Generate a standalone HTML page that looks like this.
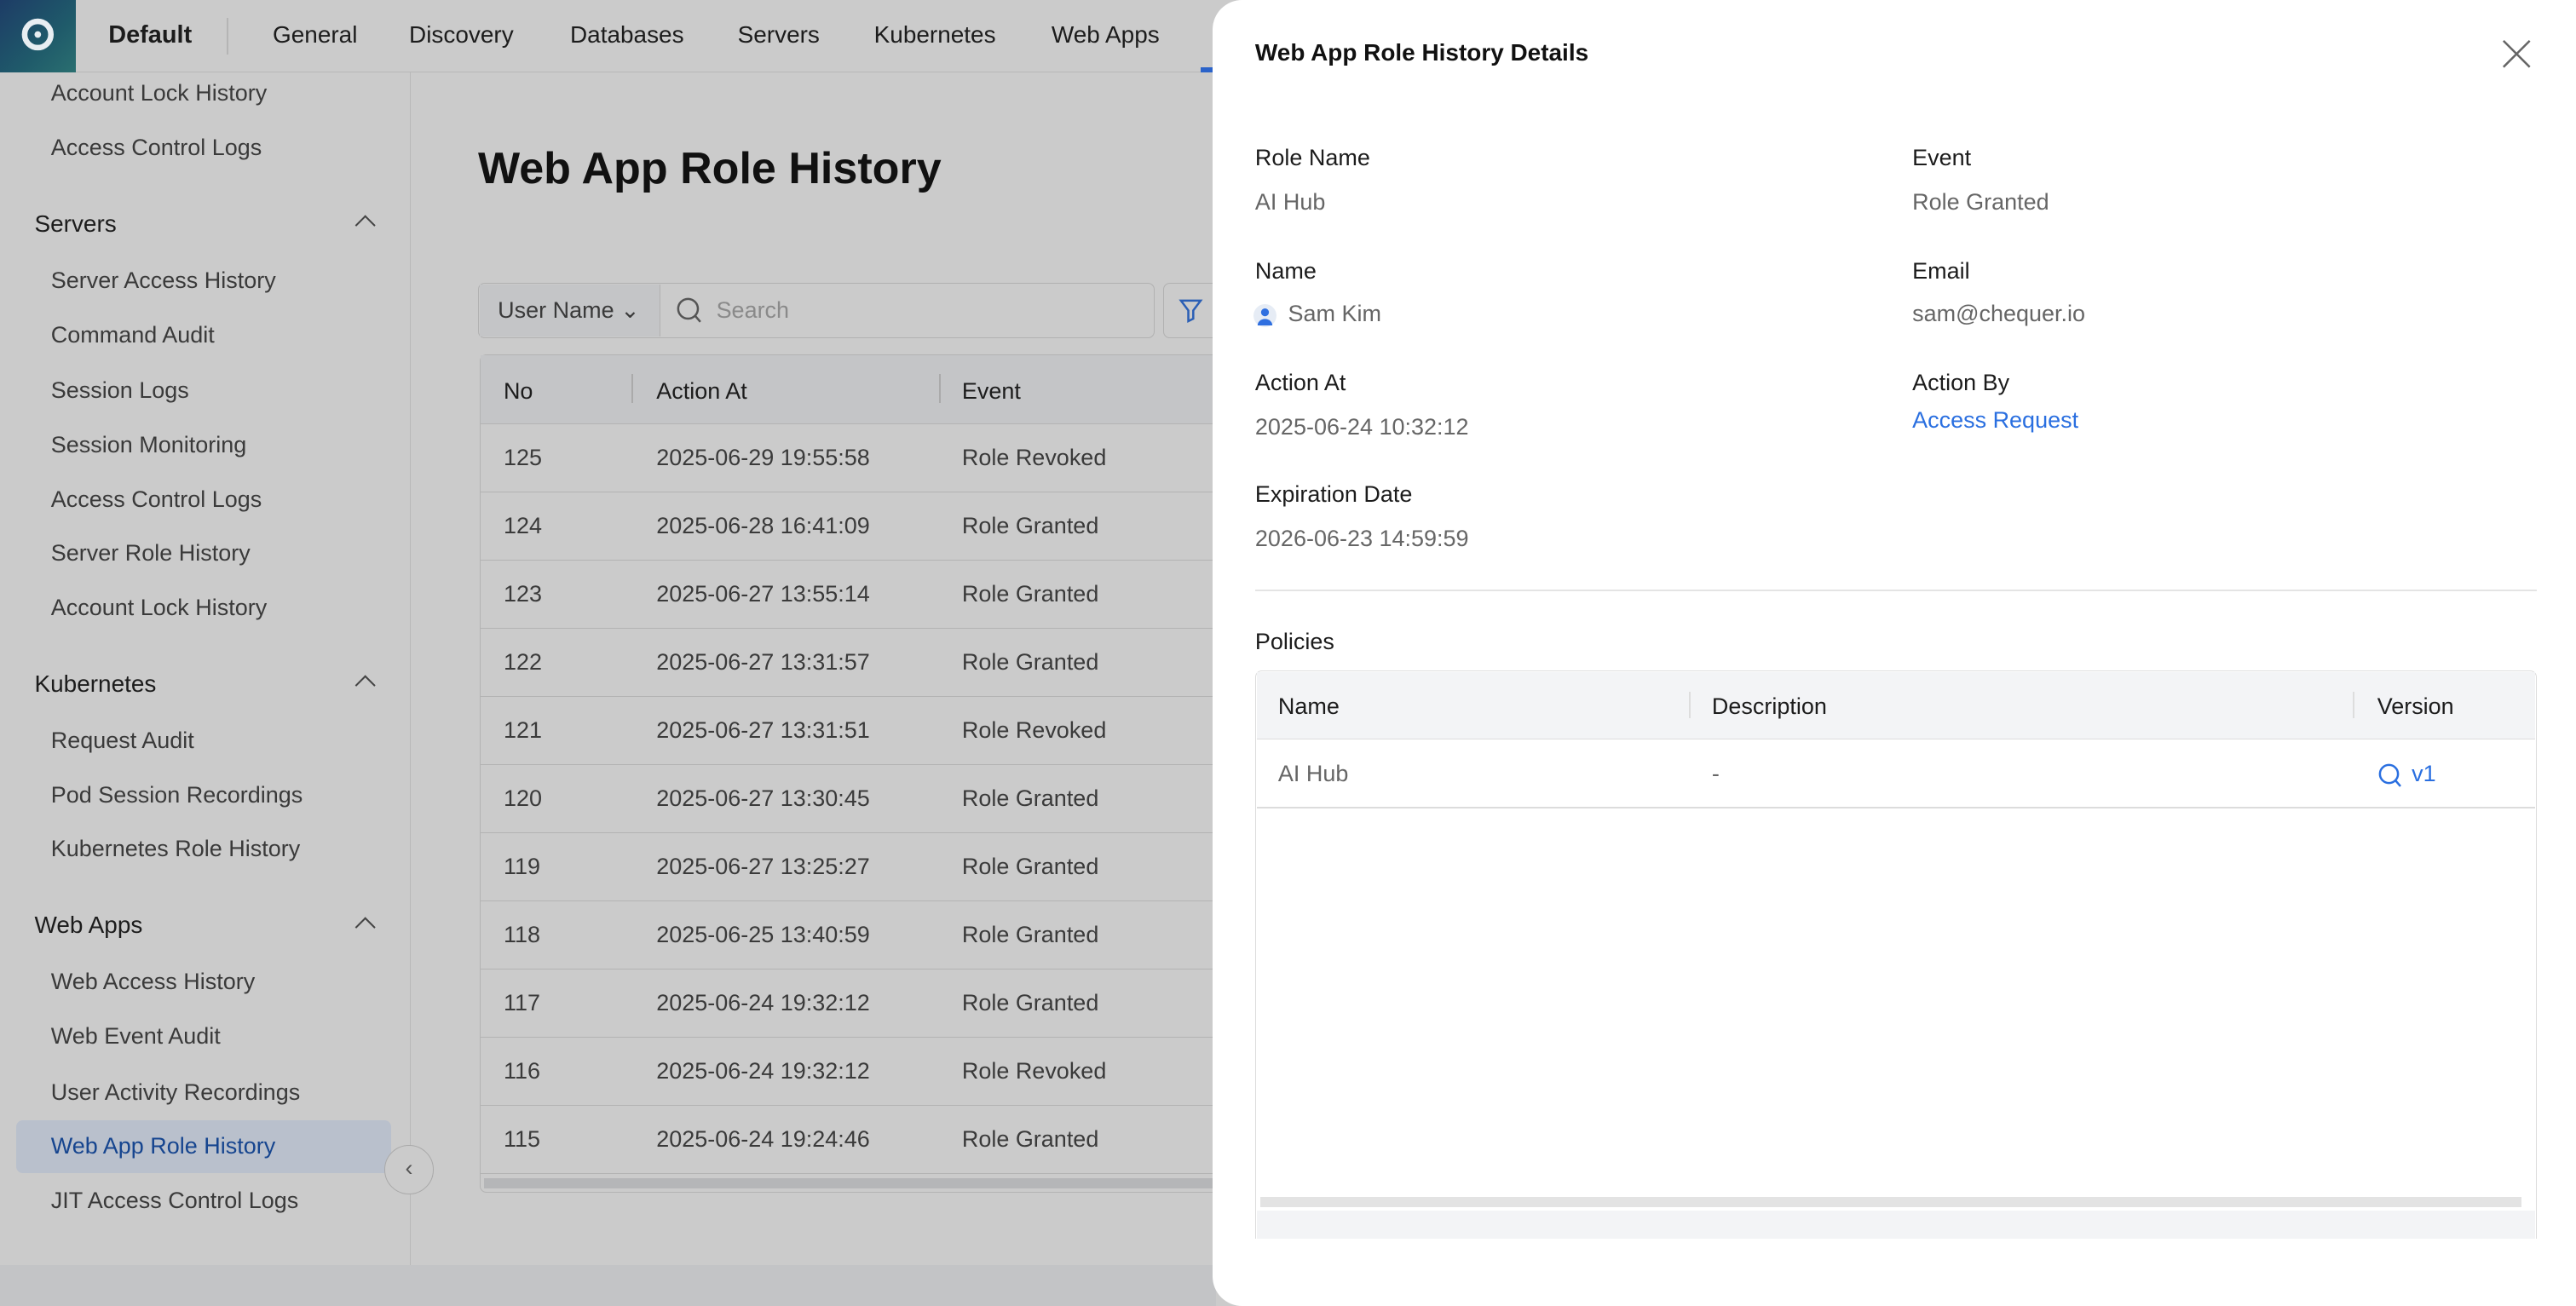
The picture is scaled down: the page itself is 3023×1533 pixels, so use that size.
<!DOCTYPE html>
<html><head><meta charset="utf-8"><style>
*{box-sizing:border-box;margin:0;padding:0}
html,body{width:3023px;height:1533px;overflow:hidden;background:#cbcbcb}
#r{zoom:1.92793;width:1568px;height:795px;position:relative;font-family:"Liberation Sans",sans-serif;color:#1c1c1c;font-size:14px;background:#cbcbcb}
.a{position:absolute}
.hdr{left:0;top:0;width:1568px;height:44px;background:#cbcbcb;border-bottom:1px solid #b8b8b8}
.logo{left:0;top:0;width:46px;height:44px;background:linear-gradient(135deg,#1d3c66,#1f5a6a 60%,#2a6f70)}
.nav{top:13px;font-size:14.5px;color:#1c1c1c}
.side{left:0;top:44px;width:250px;height:726px;border-right:1px solid #b9b9b9}
.si{left:31px;font-size:14px;color:#3a3a3a}
.sh{left:21px;font-size:14.5px;color:#1c1c1c}
.car{left:218px;width:9px;height:9px;border-left:1.5px solid #444;border-top:1.5px solid #444;transform:rotate(45deg)}
.tbl{left:292px;top:216px;width:460px;height:510px;border:1px solid #b3b3b3;border-radius:4px}
.th{left:0;top:0;width:460px;height:42px;background:#c4c5c7;border-bottom:1px solid #b3b3b3}
.row{left:0;width:460px;height:41.5px;border-bottom:1px solid #b3b3b3;color:#3a3a3a}
.row span{position:absolute;top:12px}
.drw{left:738px;top:0;width:830px;height:795px;background:#fff;border-radius:18px 0 0 18px}
.lb{font-size:14px;color:#1c1c1c}
.vl{font-size:14px;color:#666}
</style></head><body><div id="r">
<div class="a hdr"></div>
<div class="a logo"><svg width="46" height="44" viewBox="0 0 46 44"><path d="M23 11a8 8 0 1 1 0 16l-4 5" fill="none" stroke="#e8eef2" stroke-width="0"/><circle cx="23" cy="21" r="8" fill="none" stroke="#e8eef2" stroke-width="3.4"/><circle cx="23" cy="21" r="2" fill="#e8eef2"/></svg></div>
<div class="a nav" style="left:66px;font-weight:bold;font-size:15px">Default</div>
<div class="a" style="left:138px;top:11px;width:1px;height:22px;background:#b5b5b5"></div>
<div class="a nav" style="left:166px">General</div>
<div class="a nav" style="left:249px">Discovery</div>
<div class="a nav" style="left:347px">Databases</div>
<div class="a nav" style="left:449px">Servers</div>
<div class="a nav" style="left:532px">Kubernetes</div>
<div class="a nav" style="left:640px">Web Apps</div>
<div class="a" style="left:731px;top:41px;width:8px;height:3px;background:#2b63c9"></div>
<div class="a side"></div>
<div class="a si" style="top:49px">Account Lock History</div>
<div class="a si" style="top:82px">Access Control Logs</div>
<div class="a sh" style="top:128px">Servers</div><div class="a car" style="top:133px"></div>
<div class="a si" style="top:163px">Server Access History</div>
<div class="a si" style="top:196px">Command Audit</div>
<div class="a si" style="top:230px">Session Logs</div>
<div class="a si" style="top:263px">Session Monitoring</div>
<div class="a si" style="top:296px">Access Control Logs</div>
<div class="a si" style="top:329px">Server Role History</div>
<div class="a si" style="top:362px">Account Lock History</div>
<div class="a sh" style="top:408px">Kubernetes</div><div class="a car" style="top:413px"></div>
<div class="a si" style="top:443px">Request Audit</div>
<div class="a si" style="top:476px">Pod Session Recordings</div>
<div class="a si" style="top:509px">Kubernetes Role History</div>
<div class="a sh" style="top:555px">Web Apps</div><div class="a car" style="top:560px"></div>
<div class="a si" style="top:590px">Web Access History</div>
<div class="a si" style="top:623px">Web Event Audit</div>
<div class="a si" style="top:657px">User Activity Recordings</div>
<div class="a" style="left:10px;top:682px;width:228px;height:32px;background:#b9c0cc;border-radius:4px"></div>
<div class="a si" style="top:690px;color:#16458f">Web App Role History</div>
<div class="a si" style="top:723px">JIT Access Control Logs</div>
<div class="a" style="left:234px;top:697px;width:30px;height:30px;border-radius:50%;border:1px solid #a9a9a9;background:#cbcbcb;text-align:center;line-height:28px;color:#555;font-size:14px">&#8249;</div>
<div class="a" style="left:0;top:770px;width:740px;height:25px;background:#c3c4c6"></div>
<div class="a" style="left:291px;top:87px;font-size:27px;font-weight:bold;color:#111">Web App Role History</div>
<div class="a" style="left:291px;top:172px;width:412px;height:34px;border:1px solid #b1b1b1;border-radius:4px"></div>
<div class="a" style="left:292px;top:173px;width:110px;height:32px;background:#c4c5c7;border-right:1px solid #b1b1b1"></div>
<div class="a" style="left:303px;top:181px;color:#3a3a3a">User Name &#8964;</div>
<svg class="a" style="left:411px;top:180px" width="18" height="18" viewBox="0 0 18 18"><circle cx="8" cy="8" r="6" fill="none" stroke="#555" stroke-width="1.3"/><path d="M12.5 12.5l3 3.5" stroke="#555" stroke-width="1.3"/></svg>
<div class="a" style="left:436px;top:181px;color:#8a8a8a">Search</div>
<div class="a" style="left:708px;top:172px;width:40px;height:34px;border:1px solid #b1b1b1;border-radius:4px"></div>
<svg class="a" style="left:717px;top:181px" width="16" height="16" viewBox="0 0 16 16"><path d="M2 2h12l-4.5 6v5l-3 1.5V8z" fill="none" stroke="#2b5fb5" stroke-width="1.3"/></svg>
<div class="a tbl">
<div class="a th"><span class="a" style="left:14px;top:14px">No</span><span class="a" style="left:92px;top:11px;width:1px;height:18px;background:#aaa"></span><span class="a" style="left:107px;top:14px">Action At</span><span class="a" style="left:279px;top:11px;width:1px;height:18px;background:#aaa"></span><span class="a" style="left:293px;top:14px">Event</span></div>
<div class="a row" style="top:42px"><span style="left:14px">125</span><span style="left:107px">2025-06-29 19:55:58</span><span style="left:293px">Role Revoked</span></div>
<div class="a row" style="top:83.5px"><span style="left:14px">124</span><span style="left:107px">2025-06-28 16:41:09</span><span style="left:293px">Role Granted</span></div>
<div class="a row" style="top:125px"><span style="left:14px">123</span><span style="left:107px">2025-06-27 13:55:14</span><span style="left:293px">Role Granted</span></div>
<div class="a row" style="top:166.5px"><span style="left:14px">122</span><span style="left:107px">2025-06-27 13:31:57</span><span style="left:293px">Role Granted</span></div>
<div class="a row" style="top:208px"><span style="left:14px">121</span><span style="left:107px">2025-06-27 13:31:51</span><span style="left:293px">Role Revoked</span></div>
<div class="a row" style="top:249.5px"><span style="left:14px">120</span><span style="left:107px">2025-06-27 13:30:45</span><span style="left:293px">Role Granted</span></div>
<div class="a row" style="top:291px"><span style="left:14px">119</span><span style="left:107px">2025-06-27 13:25:27</span><span style="left:293px">Role Granted</span></div>
<div class="a row" style="top:332.5px"><span style="left:14px">118</span><span style="left:107px">2025-06-25 13:40:59</span><span style="left:293px">Role Granted</span></div>
<div class="a row" style="top:374px"><span style="left:14px">117</span><span style="left:107px">2025-06-24 19:32:12</span><span style="left:293px">Role Granted</span></div>
<div class="a row" style="top:415.5px"><span style="left:14px">116</span><span style="left:107px">2025-06-24 19:32:12</span><span style="left:293px">Role Revoked</span></div>
<div class="a row" style="top:457px"><span style="left:14px">115</span><span style="left:107px">2025-06-24 19:24:46</span><span style="left:293px">Role Granted</span></div>
<div class="a" style="left:2px;top:501px;width:456px;height:6px;background:#b5b6b8"></div>
</div>
<div class="a drw">
<div class="a" style="left:26px;top:24px;font-size:14.5px;font-weight:bold;color:#111">Web App Role History Details</div>
<svg class="a" style="left:784px;top:23px" width="20" height="20" viewBox="0 0 20 20"><path d="M2 2l16 16M18 2L2 18" stroke="#666" stroke-width="1.3"/></svg>
<div class="a lb" style="left:26px;top:88px">Role Name</div><div class="a vl" style="left:26px;top:115px">AI Hub</div>
<div class="a lb" style="left:426px;top:88px">Event</div><div class="a vl" style="left:426px;top:115px">Role Granted</div>
<div class="a lb" style="left:26px;top:157px">Name</div>
<svg class="a" style="left:25px;top:185px" width="14" height="14" viewBox="0 0 14 14"><circle cx="7" cy="7" r="7" fill="#e6ecf5"/><circle cx="7" cy="5" r="2.4" fill="#2f6fe0"/><path d="M2.5 13a4.5 4 0 0 1 9 0z" fill="#2f6fe0"/></svg>
<div class="a vl" style="left:46px;top:183px">Sam Kim</div>
<div class="a lb" style="left:426px;top:157px">Email</div><div class="a vl" style="left:426px;top:183px">sam@chequer.io</div>
<div class="a lb" style="left:26px;top:225px">Action At</div><div class="a vl" style="left:26px;top:252px">2025-06-24 10:32:12</div>
<div class="a lb" style="left:426px;top:225px">Action By</div><div class="a" style="left:426px;top:248px;color:#2a6fe0">Access Request</div>
<div class="a lb" style="left:26px;top:293px">Expiration Date</div><div class="a vl" style="left:26px;top:320px">2026-06-23 14:59:59</div>
<div class="a" style="left:26px;top:359px;width:780px;height:1px;background:#e4e4e4"></div>
<div class="a lb" style="left:26px;top:383px">Policies</div>
<div class="a" style="left:26px;top:408px;width:780px;height:346px;border:1px solid #dcdcdc;border-bottom:none;border-radius:4px 4px 0 0"></div>
<div class="a" style="left:27px;top:409px;width:778px;height:41px;background:#f3f4f6;border-bottom:1px solid #dcdcdc"></div>
<div class="a lb" style="left:40px;top:422px">Name</div>
<div class="a" style="left:290px;top:421px;width:1px;height:16px;background:#ddd"></div>
<div class="a lb" style="left:304px;top:422px">Description</div>
<div class="a" style="left:694px;top:421px;width:1px;height:16px;background:#ddd"></div>
<div class="a lb" style="left:709px;top:422px">Version</div>
<div class="a vl" style="left:40px;top:463px">AI Hub</div>
<div class="a vl" style="left:304px;top:463px">-</div>
<svg class="a" style="left:709px;top:464px" width="16" height="16" viewBox="0 0 16 16"><circle cx="7" cy="7" r="5.5" fill="none" stroke="#2a6fe0" stroke-width="1.3"/><path d="M11 11l3 3.5" stroke="#2a6fe0" stroke-width="1.3"/></svg>
<div class="a" style="left:730px;top:463px;color:#2a6fe0">v1</div>
<div class="a" style="left:27px;top:491px;width:778px;height:1px;background:#dcdcdc"></div>
<div class="a" style="left:29px;top:729px;width:768px;height:6px;background:#e3e3e3"></div>
<div class="a" style="left:27px;top:737px;width:778px;height:17px;background:#f3f4f6"></div>
</div>
</div></body></html>
